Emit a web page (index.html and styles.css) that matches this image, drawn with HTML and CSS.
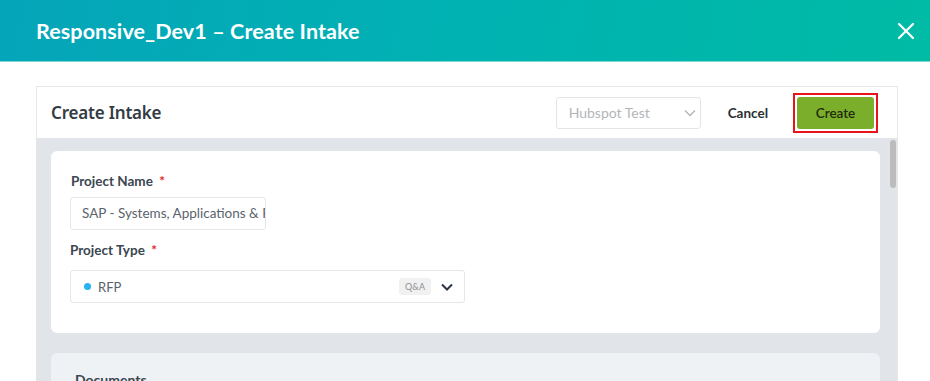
FILE: index.html
```html
<!DOCTYPE html>
<html>
<head>
<meta charset="utf-8">
<link rel="stylesheet" href="styles.css">
</head>
<body>
<header class="topbar">
  <h1 class="title">Responsive_Dev1 – Create Intake</h1>
  <button class="close" aria-label="Close">
    <svg width="18" height="18" viewBox="0 0 18 18"><path d="M2 2L16 16M16 2L2 16" stroke="#fff" stroke-width="2.2" stroke-linecap="round"/></svg>
  </button>
</header>
<main class="page">
  <section class="panel">
    <div class="panel-head">
      <h2 class="panel-title">Create Intake</h2>
      <div class="actions">
        <div class="select-sm">
          <span>Hubspot Test</span>
          <svg width="12" height="8" viewBox="0 0 12 8"><path d="M1 1.5L6 6.5L11 1.5" fill="none" stroke="#b5b5b5" stroke-width="1.4"/></svg>
        </div>
        <button class="cancel">Cancel</button>
        <div class="focus-ring"><button class="create">Create</button></div>
      </div>
    </div>
    <div class="panel-body">
      <div class="content">
        <div class="card">
          <label class="label">Project Name <span class="req">*</span></label>
          <div class="input">SAP - Systems, Applications &amp; Products</div>
          <label class="label label-2">Project Type <span class="req">*</span></label>
          <div class="select-lg">
            <span class="dot"></span>
            <span class="sel-text">RFP</span>
            <span class="badge">Q&amp;A</span>
            <svg width="12" height="8" viewBox="0 0 12 8"><path d="M1 1.5L6 6.5L11 1.5" fill="none" stroke="#2b3640" stroke-width="2"/></svg>
          </div>
        </div>
        <div class="card card-alt">
          <h3 class="sub">Documents</h3>
        </div>
      </div>
      <div class="scrollbar"><div class="thumb"></div></div>
    </div>
  </section>
</main>
</body>
</html>
```
FILE: styles.css
```css
* { box-sizing: border-box; }
html, body { margin: 0; padding: 0; }
body {
  width: 930px;
  height: 381px;
  overflow: hidden;
  background: #fff;
  font-family: Lato, "Liberation Sans", sans-serif;
}
.topbar {
  height: 62px;
  background: linear-gradient(100deg, #05a5b9 0%, #00b2b2 50%, #00bba5 100%);
  border-bottom: 1px solid #7fd6d6;
  display: flex;
  align-items: center;
  justify-content: space-between;
  padding: 0 14px 0 36px;
}
.title {
  margin: 0;
  color: #fff;
  font-size: 21.5px;
  font-weight: 700;
  letter-spacing: 0.1px;
}
.close {
  background: none;
  border: 0;
  padding: 0;
  width: 20px;
  height: 20px;
  display: flex;
  align-items: center;
  justify-content: center;
}
.page {
  padding: 24px 32px 0 36px;
}
.panel {
  border: 1px solid #e4e6e8;
  border-bottom: 0;
  background: #fff;
}
.panel-head {
  height: 51px;
  display: flex;
  align-items: center;
  justify-content: space-between;
  padding: 0 19px 0 14px;
}
.panel-title {
  margin: 0;
  font-size: 17px;
  color: #333b44;
  font-family: "Noto Sans", Lato, sans-serif;
  font-weight: 600;
  letter-spacing: -0.2px;
}
.actions {
  display: flex;
  align-items: center;
}
.select-sm {
  width: 145px;
  height: 32px;
  border: 1px solid #e2e4e6;
  border-radius: 3px;
  display: flex;
  align-items: center;
  justify-content: space-between;
  padding: 0 4px 0 12px;
  color: #b3b6b9;
  font-size: 14px;
}
.cancel {
  background: none;
  border: 0;
  font-family: Lato, sans-serif;
  font-weight: 700;
  font-size: 13.5px;
  color: #2b2f33;
  margin-left: 27px;
  padding: 0;
}
.focus-ring {
  margin-left: 25px;
  border: 2px solid #e8141c;
  padding: 2px;
  width: 85px;
  height: 40px;
}
.create {
  width: 100%;
  height: 100%;
  background: #7aae2b;
  border: 0;
  border-radius: 3px;
  color: #1f2a10;
  font-family: Lato, sans-serif;
  font-size: 13.5px;
  font-weight: 600;
}
.panel-body {
  background: #e1e4e8;
  display: flex;
  height: 260px;
}
.content {
  flex: 1;
  padding: 13px 10px 0 14px;
  display: flex;
  flex-direction: column;
  gap: 20px;
  overflow: hidden;
}
.card {
  flex-shrink: 0;
  background: #fff;
  border-radius: 6px;
  height: 182px;
  padding: 22px 20px 0 19px;
  display: flex;
  flex-direction: column;
  align-items: flex-start;
}
.card-alt {
  background: #eff2f5;
  padding: 18px 24px;
}
.label {
  font-size: 13.5px;
  font-weight: 700;
  color: #3a4650;
  margin-left: 1px;
}
.label-2 {
  margin-top: 12px;
  margin-left: 0;
}
.req { color: #e3262c; margin-left: 3px; }
.input {
  margin-top: 8px;
  width: 196px;
  height: 33px;
  border: 1px solid #e4e6e8;
  border-radius: 3px;
  font-size: 13.5px;
  color: #5a636b;
  padding: 0 11px;
  line-height: 31px;
  white-space: nowrap;
  overflow: hidden;
}
.select-lg {
  margin-top: 12px;
  width: 395px;
  height: 33px;
  border: 1px solid #e4e6e8;
  border-radius: 3px;
  display: flex;
  align-items: center;
  padding: 0 11px 0 13px;
}
.dot {
  width: 7px;
  height: 7px;
  border-radius: 50%;
  background: #27b3f2;
}
.sel-text {
  margin-left: 7px;
  flex: 1;
  font-size: 13px;
  color: #59626a;
}
.badge {
  background: #f1f1f1;
  border-radius: 3px;
  font-size: 9px;
  color: #8b9095;
  padding: 3px 6px;
  margin-right: 10px;
}
.sub {
  margin: 0;
  font-size: 14px;
  font-weight: 700;
  color: #3a4650;
}
.scrollbar {
  width: 7px;
  padding-top: 2px;
}
.thumb {
  width: 6px;
  height: 48px;
  background: #bcbcbc;
  border-radius: 3px;
}
```
